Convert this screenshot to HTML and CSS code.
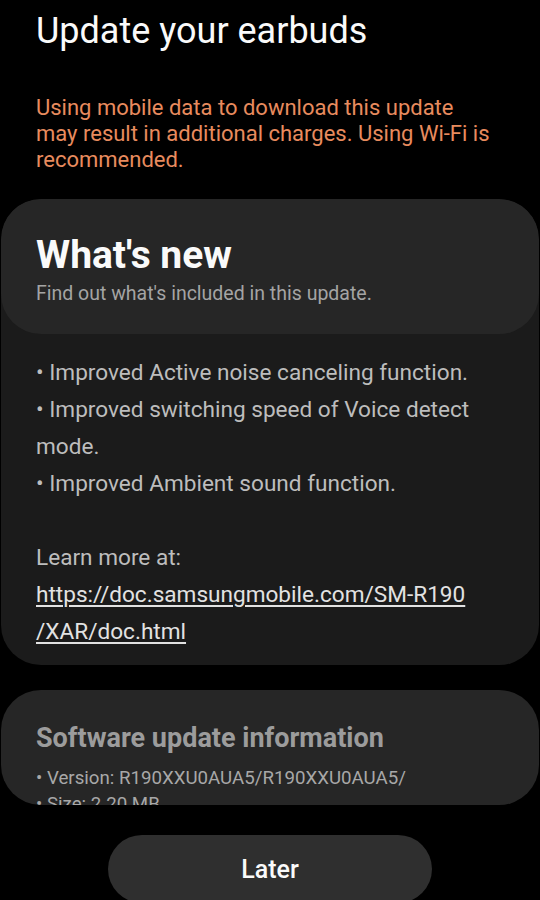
FILE: index.html
```html
<!DOCTYPE html>
<html lang="en">
<head>
    <meta charset="UTF-8">
    <meta name="viewport" content="width=device-width, initial-scale=1.0">
    <title>Update your earbuds</title>
    <link rel="stylesheet" href="styles.css">
</head>
<body>
    <div class="screen">
        <div class="intro">
            <h1 class="title">Update your earbuds</h1>
            <p class="warning">Using mobile data to download this update<br>may result in additional charges. Using Wi-Fi is<br>recommended.</p>
        </div>

        <div class="card news">
            <div class="card-head">
                <h2>What's new</h2>
                <p class="sub">Find out what's included in this update.</p>
            </div>
            <div class="card-body">
                <p>• Improved Active noise canceling function.</p>
                <p>• Improved switching speed of Voice detect mode.</p>
                <p>• Improved Ambient sound function.</p>
                <p class="blank">&nbsp;</p>
                <p>Learn more at:</p>
                <p><a href="#" class="link">https://doc.samsungmobile.com/SM-R190<br>/XAR/doc.html</a></p>
            </div>
        </div>

        <div class="card info">
            <h3>Software update information</h3>
            <p>• Version: R190XXU0AUA5/R190XXU0AUA5/</p>
            <p>• Size: 2.20 MB</p>
        </div>

        <div class="actions">
            <button class="later">Later</button>
        </div>
    </div>
</body>
</html>
```

FILE: styles.css
```css
/* Dark One UI style update screen */
body {
    margin: 0;
    background-color: #000;
    font-family: Roboto, "Noto Sans", sans-serif;
    color: #fafafa;
    overflow: hidden;
}

.screen {
    width: 540px;
    height: 900px;
    overflow: hidden;
}

.intro {
    padding: 9px 36px 0;
}

.title {
    margin: 0;
    font-size: 36px;
    line-height: 44px;
    font-weight: 400;
    color: #fafafa;
}

.warning {
    margin: 42px 0 0;
    font-size: 22px;
    line-height: 26px;
    color: #e88b5e;
}

.card {
    margin: 26px 1px 0;
    border-radius: 40px;
    overflow: hidden;
}

.news {
    background-color: #1b1b1b;
}

.card-head {
    background-color: #262626;
    border-radius: 40px;
    padding: 35px 35px 0;
    height: 135px;
    box-sizing: border-box;
}

.card-head h2 {
    margin: 0;
    font-size: 39px;
    line-height: 42px;
    font-weight: 700;
    color: #fafafa;
}

.sub {
    margin: 7px 0 0;
    font-size: 19.5px;
    line-height: 22px;
    color: #a4a4a4;
}

.card-body {
    padding: 20px 35px 15px;
}

.card-body p {
    margin: 0;
    font-size: 22.6px;
    line-height: 37px;
    color: #bdbdbd;
}

.link {
    color: #e2e2e2;
    text-decoration: underline;
    text-underline-offset: 3px;
}

.info {
    margin-top: 25px;
    height: 115px;
    box-sizing: border-box;
    padding: 32px 35px 0;
    background-color: #262626;
}

.info h3 {
    margin: 0;
    font-size: 27px;
    line-height: 32px;
    font-weight: 700;
    color: #9c9c9c;
}

.info p {
    margin: 0;
    font-size: 18.7px;
    line-height: 26px;
    color: #a8a8a8;
}

.info h3 + p {
    margin-top: 11px;
}

.actions {
    display: flex;
    justify-content: center;
    margin-top: 30px;
}

.later {
    width: 324px;
    height: 68px;
    border: none;
    border-radius: 34px;
    background-color: #2f2f2f;
    color: #fafafa;
    font-family: Roboto, "Noto Sans", sans-serif;
    font-size: 25px;
    font-weight: 500;
    padding: 0;
}
```
